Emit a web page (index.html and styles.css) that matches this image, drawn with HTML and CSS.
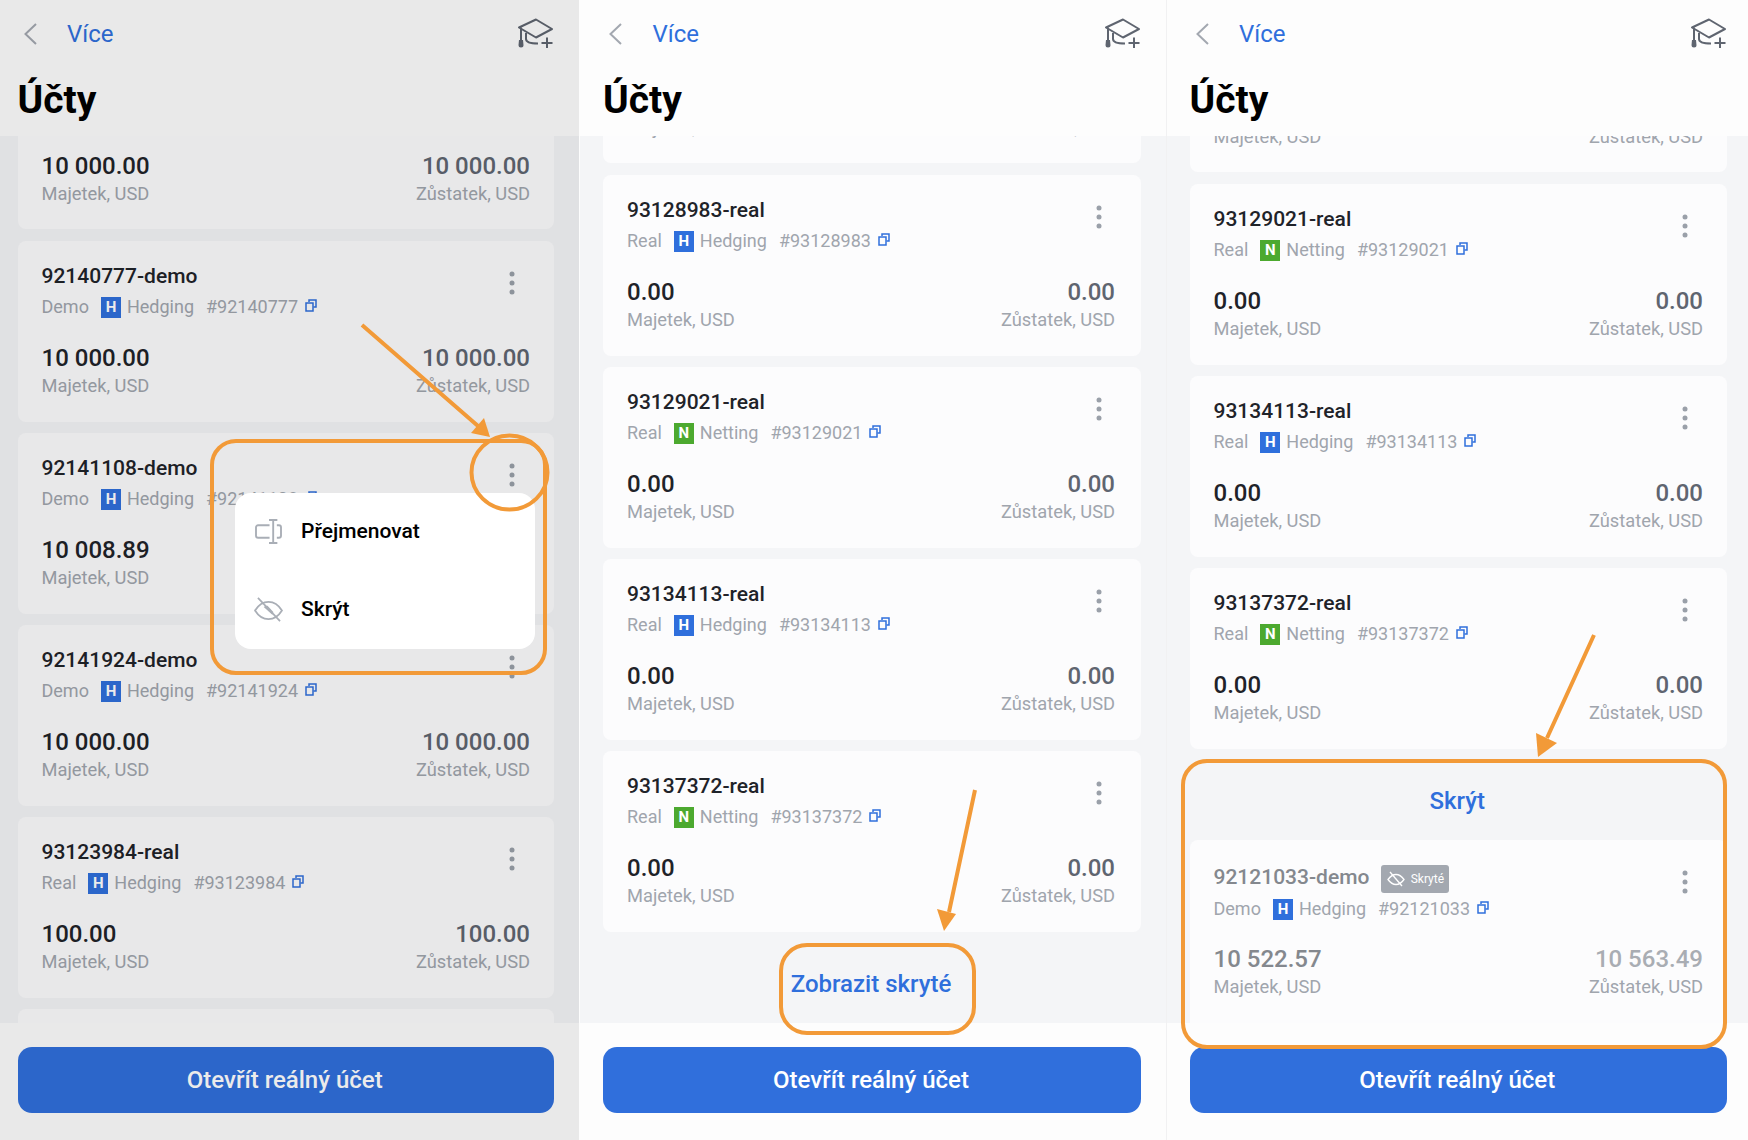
FILE: index.html
```html
<!DOCTYPE html>
<html lang="cs">
<head>
  <meta charset="UTF-8">
  <meta name="viewport" content="width=device-width, initial-scale=1.0">
  <title>Účty</title>
  <link rel="stylesheet" href="styles.css">
</head>
<body>
  <svg class="sprite" width="0" height="0">
    <symbol id="i-back" viewBox="0 0 15 22"><path d="M13 1 2.500 11 13 21" fill="none" stroke="currentColor" stroke-width="2"/></symbol>
    <symbol id="i-hat" viewBox="0 0 35 30"><g fill="none" stroke="currentColor" stroke-width="2" stroke-linejoin="round"><path d="M18 1.500 34 11 18 19.500 1 9.500z"/><path d="M8 15v6c0 3 4 4.500 12 4.500"/><path d="M3 9.500V22"/><path d="M23.500 25h11M29 19.500v10.500"/></g><path d="M1 22h4l.5 5a2.500 2.500 0 0 1-5 0z" fill="currentColor"/></symbol>
    <symbol id="i-copy" viewBox="0 0 12 13"><g fill="none" stroke="currentColor" stroke-width="1.500"><path d="M4 3V1h7v7H8.500"/><path d="M1 4h7v8H1z"/></g></symbol>
    <symbol id="i-dots" viewBox="0 0 6 24"><circle cx="3" cy="3" r="2.500"/><circle cx="3" cy="12" r="2.500"/><circle cx="3" cy="21" r="2.500"/></symbol>
    <symbol id="i-eye" viewBox="0 0 30 26"><g fill="none" stroke="currentColor" stroke-width="1.800"><path d="M1 14C5 7.500 10 5 15 5s10 2.500 14 9c-4 6.500-9 9-14 9S5 20.500 1 14z"/><path d="M4 1 27 25"/></g><path d="M10 10.500a5.500 5.500 0 0 1 4-1.500l6 6.500a5.500 5.500 0 0 1-1 3z" fill="currentColor"/></symbol>
    <symbol id="i-eye-line" viewBox="0 0 18 16"><g fill="none" stroke="currentColor" stroke-width="1.300"><path d="M1 8.500C3.500 5 6 3.500 9 3.500s5.500 1.500 8 5c-2.500 3.500-5 5-8 5s-5.500-1.500-8-5z"/><path d="M3 1 15 15"/></g></symbol>
    <symbol id="i-rename" viewBox="0 0 26 24"><g fill="none" stroke="currentColor" stroke-width="1.800"><path d="M14 6H3a2 2 0 0 0-2 2v8a2 2 0 0 0 2 2h11"/><path d="M21 6h2a2 2 0 0 1 2 2v8a2 2 0 0 1-2 2h-2"/><path d="M17.500 1v22M13.500 1h8M13.500 23h8"/></g></symbol>
  </svg>

  <section class="panel panel-a">
    <header class="top">
      <div class="nav">
        <svg class="back"><use href="#i-back"/></svg>
        <a class="more">Více</a>
        <svg class="hat"><use href="#i-hat"/></svg>
      </div>
      <h1>Účty</h1>
    </header>
    <div class="list">
      <div class="card card-cut cut-a">
        <div class="amounts"><div><strong>10 000.00</strong><small>Majetek, USD</small></div><div class="right"><strong>10 000.00</strong><small>Zůstatek, USD</small></div></div>
      </div>
      <div class="card">
        <div class="head"><div class="info"><div class="name">92140777-demo</div><div class="meta"><span>Demo</span><b class="tag">H</b><span>Hedging</span><span class="num">#92140777</span><svg class="copy"><use href="#i-copy"/></svg></div></div><svg class="dots"><use href="#i-dots"/></svg></div>
        <div class="amounts"><div><strong>10 000.00</strong><small>Majetek, USD</small></div><div class="right"><strong>10 000.00</strong><small>Zůstatek, USD</small></div></div>
      </div>
      <div class="card">
        <div class="head"><div class="info"><div class="name">92141108-demo</div><div class="meta"><span>Demo</span><b class="tag">H</b><span>Hedging</span><span class="num">#92141108</span><svg class="copy"><use href="#i-copy"/></svg></div></div><svg class="dots"><use href="#i-dots"/></svg></div>
        <div class="amounts"><div><strong>10 008.89</strong><small>Majetek, USD</small></div><div class="right"><strong>10 008.89</strong><small>Zůstatek, USD</small></div></div>
      </div>
      <div class="card">
        <div class="head"><div class="info"><div class="name">92141924-demo</div><div class="meta"><span>Demo</span><b class="tag">H</b><span>Hedging</span><span class="num">#92141924</span><svg class="copy"><use href="#i-copy"/></svg></div></div><svg class="dots"><use href="#i-dots"/></svg></div>
        <div class="amounts"><div><strong>10 000.00</strong><small>Majetek, USD</small></div><div class="right"><strong>10 000.00</strong><small>Zůstatek, USD</small></div></div>
      </div>
      <div class="card">
        <div class="head"><div class="info"><div class="name">93123984-real</div><div class="meta"><span>Real</span><b class="tag">H</b><span>Hedging</span><span class="num">#93123984</span><svg class="copy"><use href="#i-copy"/></svg></div></div><svg class="dots"><use href="#i-dots"/></svg></div>
        <div class="amounts"><div><strong>100.00</strong><small>Majetek, USD</small></div><div class="right"><strong>100.00</strong><small>Zůstatek, USD</small></div></div>
      </div>
      <div class="card"></div>
    </div>
    <footer class="bottom"><button>Otevřít reálný účet</button></footer>
    <div class="dim"></div>
    <div class="popup">
      <div class="popup-item"><svg class="popup-icon"><use href="#i-rename"/></svg>Přejmenovat</div>
      <div class="popup-item"><svg class="popup-icon"><use href="#i-eye"/></svg>Skrýt</div>
    </div>
  </section>

  <section class="panel panel-b">
    <header class="top">
      <div class="nav">
        <svg class="back"><use href="#i-back"/></svg>
        <a class="more">Více</a>
        <svg class="hat"><use href="#i-hat"/></svg>
      </div>
      <h1>Účty</h1>
    </header>
    <div class="list">
      <div class="card card-cut cut-b">
        <div class="amounts"><small>Majetek, USD</small><small>Zůstatek, USD</small></div>
      </div>
      <div class="card">
        <div class="head"><div class="info"><div class="name">93128983-real</div><div class="meta"><span>Real</span><b class="tag">H</b><span>Hedging</span><span class="num">#93128983</span><svg class="copy"><use href="#i-copy"/></svg></div></div><svg class="dots"><use href="#i-dots"/></svg></div>
        <div class="amounts"><div><strong>0.00</strong><small>Majetek, USD</small></div><div class="right"><strong>0.00</strong><small>Zůstatek, USD</small></div></div>
      </div>
      <div class="card">
        <div class="head"><div class="info"><div class="name">93129021-real</div><div class="meta"><span>Real</span><b class="tag tag-n">N</b><span>Netting</span><span class="num">#93129021</span><svg class="copy"><use href="#i-copy"/></svg></div></div><svg class="dots"><use href="#i-dots"/></svg></div>
        <div class="amounts"><div><strong>0.00</strong><small>Majetek, USD</small></div><div class="right"><strong>0.00</strong><small>Zůstatek, USD</small></div></div>
      </div>
      <div class="card">
        <div class="head"><div class="info"><div class="name">93134113-real</div><div class="meta"><span>Real</span><b class="tag">H</b><span>Hedging</span><span class="num">#93134113</span><svg class="copy"><use href="#i-copy"/></svg></div></div><svg class="dots"><use href="#i-dots"/></svg></div>
        <div class="amounts"><div><strong>0.00</strong><small>Majetek, USD</small></div><div class="right"><strong>0.00</strong><small>Zůstatek, USD</small></div></div>
      </div>
      <div class="card">
        <div class="head"><div class="info"><div class="name">93137372-real</div><div class="meta"><span>Real</span><b class="tag tag-n">N</b><span>Netting</span><span class="num">#93137372</span><svg class="copy"><use href="#i-copy"/></svg></div></div><svg class="dots"><use href="#i-dots"/></svg></div>
        <div class="amounts"><div><strong>0.00</strong><small>Majetek, USD</small></div><div class="right"><strong>0.00</strong><small>Zůstatek, USD</small></div></div>
      </div>
      <a class="toggle">Zobrazit skryté</a>
    </div>
    <footer class="bottom"><button>Otevřít reálný účet</button></footer>
  </section>

  <section class="panel panel-c">
    <header class="top">
      <div class="nav">
        <svg class="back"><use href="#i-back"/></svg>
        <a class="more">Více</a>
        <svg class="hat"><use href="#i-hat"/></svg>
      </div>
      <h1>Účty</h1>
    </header>
    <div class="list">
      <div class="card card-cut cut-c">
        <div class="amounts"><small>Majetek, USD</small><small>Zůstatek, USD</small></div>
      </div>
      <div class="card">
        <div class="head"><div class="info"><div class="name">93129021-real</div><div class="meta"><span>Real</span><b class="tag tag-n">N</b><span>Netting</span><span class="num">#93129021</span><svg class="copy"><use href="#i-copy"/></svg></div></div><svg class="dots"><use href="#i-dots"/></svg></div>
        <div class="amounts"><div><strong>0.00</strong><small>Majetek, USD</small></div><div class="right"><strong>0.00</strong><small>Zůstatek, USD</small></div></div>
      </div>
      <div class="card">
        <div class="head"><div class="info"><div class="name">93134113-real</div><div class="meta"><span>Real</span><b class="tag">H</b><span>Hedging</span><span class="num">#93134113</span><svg class="copy"><use href="#i-copy"/></svg></div></div><svg class="dots"><use href="#i-dots"/></svg></div>
        <div class="amounts"><div><strong>0.00</strong><small>Majetek, USD</small></div><div class="right"><strong>0.00</strong><small>Zůstatek, USD</small></div></div>
      </div>
      <div class="card">
        <div class="head"><div class="info"><div class="name">93137372-real</div><div class="meta"><span>Real</span><b class="tag tag-n">N</b><span>Netting</span><span class="num">#93137372</span><svg class="copy"><use href="#i-copy"/></svg></div></div><svg class="dots"><use href="#i-dots"/></svg></div>
        <div class="amounts"><div><strong>0.00</strong><small>Majetek, USD</small></div><div class="right"><strong>0.00</strong><small>Zůstatek, USD</small></div></div>
      </div>
      <a class="toggle">Skrýt</a>
      <div class="card card-hidden">
        <div class="head"><div class="info"><div class="name">92121033-demo<span class="hidden-tag"><svg class="hidden-eye"><use href="#i-eye-line"/></svg>Skryté</span></div><div class="meta"><span>Demo</span><b class="tag">H</b><span>Hedging</span><span class="num">#92121033</span><svg class="copy"><use href="#i-copy"/></svg></div></div><svg class="dots"><use href="#i-dots"/></svg></div>
        <div class="amounts"><div><strong>10 522.57</strong><small>Majetek, USD</small></div><div class="right"><strong>10 563.49</strong><small>Zůstatek, USD</small></div></div>
      </div>
    </div>
    <footer class="bottom"><button>Otevřít reálný účet</button></footer>
  </section>

  <!-- orange marks drawn on top of the three screens -->
  <svg class="marks" viewBox="0 0 1748 1140">
    <g fill="none" stroke="#f29a38" stroke-width="4">
      <rect x="212" y="441" width="333" height="232" rx="24"/>
      <ellipse cx="509.500" cy="472.500" rx="38" ry="37"/>
      <rect x="781" y="945" width="193" height="88" rx="26"/>
      <rect x="1183" y="761" width="542" height="286" rx="24"/>
      <path d="M362 325 478 426M975 790 949 912M1594 635 1547 738"/>
    </g>
    <g fill="#f29a38">
      <path d="M490 437 471 433 484 418z"/>
      <path d="M944 931 937 909 956 914z"/>
      <path d="M1538 757 1536 733 1557 743z"/>
    </g>
  </svg>
</body>
</html>
```

FILE: styles.css
```css
* {
  box-sizing: border-box;
}
body {
  margin: 0;
  width: 1748px;
  height: 1140px;
  overflow: hidden;
  display: flex;
  position: relative;
  font-family: Roboto, sans-serif;
  background-color: #fdfdfd;
}
.sprite {
  position: absolute;
}
.panel {
  position: relative;
  height: 1140px;
  display: flex;
  flex-direction: column;
  background-color: #fdfdfd;
}
.panel-a {
  width: 579px;
  --pad-l: 17.5px;
  --pad-r: 25px;
}
.panel-b {
  width: 586px;
  margin-left: 1px;
  --pad-l: 23px;
  --pad-r: 25px;
}
.panel-b .right {
  margin-right: 2px;
}
.panel-c {
  width: 582px;
  border-left: 1px solid #f1f1f2;
  --pad-l: 22.5px;
  --pad-r: 21px;
}
.top {
  height: 136px;
  flex-shrink: 0;
  padding: 14px var(--pad-r) 0 var(--pad-l);
}
.nav {
  height: 40px;
  display: flex;
  align-items: center;
}
.back {
  width: 15px;
  height: 22px;
  margin-left: 5px;
  color: #a3a8b0;
}
.more {
  margin-left: 29.5px;
  font-size: 24px;
  color: #2f6fdc;
}
.hat {
  width: 35px;
  height: 30px;
  margin: -2px 1px 0 auto;
  color: #5f6570;
}
h1 {
  margin: 22px 0 0;
  font-size: 39px;
  line-height: 48px;
  font-weight: 700;
  color: #000;
}
.list {
  flex: 1;
  overflow: hidden;
  padding: 0 var(--pad-r) 0 var(--pad-l);
  background-color: #f4f5f7;
}
.card {
  height: 181px;
  flex-shrink: 0;
  margin-bottom: 11px;
  padding: 23px 24px;
  border-radius: 8px;
  background-color: #fcfcfd;
}
/* first card of a list, already scrolled under the header */
.card-cut {
  margin-bottom: 12px;
  padding: 0 24px;
  overflow: hidden;
  border-radius: 0 0 8px 8px;
}
.cut-a {
  height: 93px;
}
.cut-a .amounts {
  margin-top: 15px;
}
.cut-b {
  height: 27px;
}
.cut-b .amounts {
  margin-top: -21px;
}
.cut-c {
  height: 36px;
}
.cut-c .amounts {
  margin-top: -12px;
}
.head {
  display: flex;
  justify-content: space-between;
}
.name {
  height: 24px;
  display: flex;
  align-items: center;
  font-size: 21px;
  font-weight: 500;
  color: #1f2329;
}
.meta {
  height: 24px;
  margin-top: 6px;
  display: flex;
  align-items: center;
  font-size: 18px;
  color: #a0a5ad;
}
.tag {
  width: 20px;
  height: 21px;
  margin: 2px 6px 0 12px;
  display: flex;
  align-items: center;
  justify-content: center;
  font-size: 15px;
  font-weight: 700;
  color: #fff;
  background-color: #2f6fdc;
}
.tag-n {
  background-color: #4ca92f;
}
.num {
  margin-left: 12px;
}
.copy {
  width: 12px;
  height: 13px;
  margin: -2px 0 0 7px;
  color: #2f6fdc;
}
.dots {
  width: 6px;
  height: 24px;
  margin: 7px 15px 0 0;
  fill: #9aa0a9;
}
.amounts {
  margin-top: 25px;
  display: flex;
  justify-content: space-between;
}
.amounts strong {
  display: block;
  font-size: 24px;
  line-height: 30px;
  font-weight: 500;
  color: #1f2329;
}
.amounts small {
  display: block;
  margin-top: 2px;
  font-size: 18.3px;
  line-height: 22px;
  color: #a0a5ad;
}
.right {
  text-align: right;
}
.right strong {
  color: #5f6570;
}
.toggle {
  height: 80px;
  margin-top: 11px;
  padding: 2px 2px 0 0;
  display: flex;
  align-items: center;
  justify-content: center;
  font-size: 24px;
  font-weight: 500;
  color: #2f6fdc;
}
.card-hidden {
  height: 190px;
  margin: 0;
}
.card-hidden .name {
  height: 28px;
  color: #84888e;
}
.card-hidden .meta {
  margin-top: 5px;
}
.card-hidden .dots {
  margin-top: 7px;
}
.card-hidden .amounts {
  margin-top: 24px;
}
.card-hidden .amounts strong {
  color: #84888e;
}
.card-hidden .right strong {
  color: #a9adb3;
}
.hidden-tag {
  width: 68px;
  height: 28px;
  margin: 4px 0 0 12px;
  display: flex;
  align-items: center;
  justify-content: center;
  gap: 6px;
  font-size: 12px;
  font-weight: 400;
  color: #fff;
  background-color: #a3a8b0;
  border-radius: 3px;
}
.hidden-eye {
  width: 18px;
  height: 16px;
}
.bottom {
  height: 117px;
  flex-shrink: 0;
  padding: 24px var(--pad-r) 0 var(--pad-l);
}
button {
  width: 100%;
  height: 66px;
  padding: 0 2px 0 0;
  border: none;
  border-radius: 14px;
  font-family: Roboto, sans-serif;
  font-size: 24px;
  font-weight: 500;
  color: #fff;
  background-color: #306fdc;
}
.dim {
  position: absolute;
  inset: 0;
  background-color: rgba(0, 0, 0, 0.08);
}
.popup {
  position: absolute;
  left: 235px;
  top: 493px;
  width: 300px;
  height: 156px;
  padding: 0 19px;
  display: flex;
  flex-direction: column;
  gap: 2px;
  border-radius: 16px;
  background-color: #fff;
}
.popup-item {
  height: 76px;
  display: flex;
  align-items: center;
  gap: 18px;
  font-size: 21px;
  font-weight: 500;
  color: #000;
}
.popup-icon {
  width: 29px;
  height: 25px;
  color: #a9aeb6;
}
.marks {
  position: absolute;
  left: 0;
  top: 0;
  width: 1748px;
  height: 1140px;
  pointer-events: none;
}
```
